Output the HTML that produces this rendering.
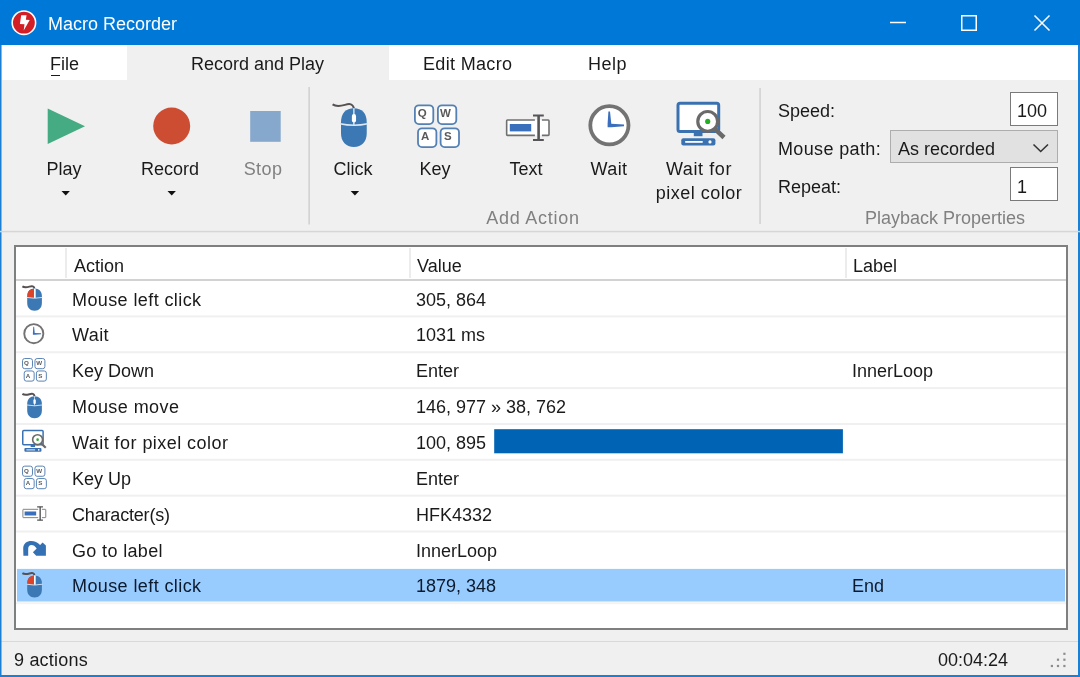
<!DOCTYPE html>
<html><head><meta charset="utf-8">
<style>
*{box-sizing:border-box;margin:0;padding:0}
html,body{width:1080px;height:677px;overflow:hidden;background:#f0f0f0;font-family:"Liberation Sans",sans-serif;color:#1a1a1a}
.a{position:absolute}
.t{position:absolute;font-size:18px;line-height:18px;white-space:nowrap;-webkit-font-smoothing:antialiased;will-change:transform}
.c{text-align:center;width:200px}
.g{color:#808080}
svg{position:absolute;left:0;top:0;overflow:visible}
</style></head><body>
<!-- title bar -->
<div class="a" style="left:0;top:0;width:1080px;height:45px;background:#0078d7"></div>
<div class="t" style="left:48px;top:15px;color:#fff">Macro Recorder</div>
<!-- menu row -->
<div class="a" style="left:2px;top:45px;width:1076px;height:35px;background:#fff"></div>
<div class="a" style="left:127px;top:45px;width:262px;height:35px;background:#f0f0f0"></div>
<div class="t" style="left:50px;top:55px">File</div>
<div class="a" style="left:51px;top:75px;width:9px;height:1px;background:#1a1a1a"></div>
<div class="t" style="left:191px;top:55px">Record and Play</div>
<div class="t" style="left:423px;top:55px;letter-spacing:0.33px">Edit Macro</div>
<div class="t" style="left:588px;top:55px;letter-spacing:0.5px">Help</div>

<!-- ribbon line -->




<!-- ribbon labels -->
<div class="t c" style="left:-36px;top:160px">Play</div>
<div class="t c" style="left:70px;top:160px">Record</div>
<div class="t c g" style="left:163px;top:160px;letter-spacing:0.4px">Stop</div>
<div class="t c" style="left:253px;top:160px">Click</div>
<div class="t c" style="left:335px;top:160px">Key</div>
<div class="t c" style="left:426px;top:160px">Text</div>
<div class="t c" style="left:509px;top:160px;letter-spacing:0.4px">Wait</div>
<div class="t c" style="left:599px;top:160px;letter-spacing:0.6px">Wait for</div>
<div class="t c" style="left:599px;top:184px;letter-spacing:0.5px">pixel color</div>
<div class="t c g" style="left:433px;top:209px;letter-spacing:0.75px">Add Action</div>
<div class="t c g" style="left:845px;top:209px">Playback Properties</div>

<div class="t" style="left:778px;top:102px">Speed:</div>
<div class="t" style="left:778px;top:140px;letter-spacing:0.36px">Mouse path:</div>
<div class="t" style="left:778px;top:178px">Repeat:</div>
<div class="a" style="left:1010px;top:92px;width:48px;height:34px;background:#fff;border:1.5px solid #7a7a7a"></div>
<div class="t" style="left:1017px;top:102px">100</div>
<div class="a" style="left:890px;top:130px;width:168px;height:33px;background:#e1e1e1;border:1.5px solid #adadad"></div>
<div class="t" style="left:898px;top:140px">As recorded</div>
<div class="a" style="left:1010px;top:167px;width:48px;height:34px;background:#fff;border:1.5px solid #7a7a7a"></div>
<div class="t" style="left:1017px;top:178px">1</div>

<!-- list box -->
<div class="a" style="left:14px;top:245px;width:1054px;height:385px;background:#fff;border:2px solid #7f7f7f"></div>
<div class="a" style="left:16px;top:279px;width:1050px;height:2px;background:#d2d2d2"></div>
<div class="a" style="left:65px;top:248px;width:2px;height:30px;background:#ececec"></div>
<div class="a" style="left:409px;top:248px;width:2px;height:30px;background:#ececec"></div>
<div class="a" style="left:845px;top:248px;width:2px;height:30px;background:#ececec"></div>
<div class="t" style="left:74px;top:257px">Action</div>
<div class="t" style="left:417px;top:257px">Value</div>
<div class="t" style="left:853px;top:257px">Label</div>

<svg width="1080" height="677" style="position:absolute;left:0;top:0">
<rect x="16" y="315.40" width="1050" height="2" fill="#f0f0f0"/>
<rect x="16" y="351.25" width="1050" height="2" fill="#f0f0f0"/>
<rect x="16" y="387.10" width="1050" height="2" fill="#f0f0f0"/>
<rect x="16" y="422.95" width="1050" height="2" fill="#f0f0f0"/>
<rect x="16" y="458.80" width="1050" height="2" fill="#f0f0f0"/>
<rect x="16" y="494.65" width="1050" height="2" fill="#f0f0f0"/>
<rect x="16" y="530.50" width="1050" height="2" fill="#f0f0f0"/>
<rect x="16" y="602.20" width="1050" height="2" fill="#f3f3f3"/>
<rect x="17" y="568.9" width="1048" height="32.6" fill="#98cbfe"/>
<rect x="494.2" y="429.2" width="348.7" height="24.1" fill="#0063b3"/>
</svg>
<div class="t" style="left:72px;top:291px;letter-spacing:0.4px">Mouse left click</div>
<div class="t" style="left:416px;top:291px">305, 864</div>
<div class="t" style="left:72px;top:326px;letter-spacing:0.4px">Wait</div>
<div class="t" style="left:416px;top:326px">1031 ms</div>
<div class="t" style="left:72px;top:362px">Key Down</div>
<div class="t" style="left:416px;top:362px">Enter</div>
<div class="t" style="left:852px;top:362px">InnerLoop</div>
<div class="t" style="left:72px;top:398px;letter-spacing:0.44px">Mouse move</div>
<div class="t" style="left:416px;top:398px">146, 977 » 38, 762</div>
<div class="t" style="left:72px;top:434px;letter-spacing:0.45px">Wait for pixel color</div>
<div class="t" style="left:416px;top:434px">100, 895</div>
<div class="t" style="left:72px;top:470px">Key Up</div>
<div class="t" style="left:416px;top:470px">Enter</div>
<div class="t" style="left:72px;top:506px;letter-spacing:-0.18px">Character(s)</div>
<div class="t" style="left:416px;top:506px">HFK4332</div>
<div class="t" style="left:72px;top:542px;letter-spacing:0.35px">Go to label</div>
<div class="t" style="left:416px;top:542px">InnerLoop</div>
<div class="t" style="left:72px;top:577px;color:#0c1a2e;letter-spacing:0.4px">Mouse left click</div>
<div class="t" style="left:416px;top:577px;color:#0c1a2e">1879, 348</div>
<div class="t" style="left:852px;top:577px;color:#0c1a2e">End</div>

<!-- status bar -->
<div class="a" style="left:0;top:641px;width:1080px;height:1px;background:#d9d9d9"></div>
<div class="t" style="left:14px;top:651px;letter-spacing:0.2px">9 actions</div>
<div class="t" style="left:938px;top:651px">00:04:24</div>

<!-- window borders -->


<svg width="1080" height="677" viewBox="0 0 1080 677">
<defs><clipPath id="mclip"><path d="M0,14 C0,5 5,0 13,0 C21,0 26,5 26,14 L26,25 C26,34 21,39 13,39 C5,39 0,34 0,25 Z"/></clipPath></defs>
<!-- title icon -->
<circle cx="23.9" cy="22.7" r="11.7" fill="#d21f26" stroke="#fff" stroke-width="1.6"/>
<path d="M21.2,15.2 L26.5,15.2 L25.9,19.8 L29.7,20 L23.7,30.5 L24.5,24.3 L19.9,24.1 Z" fill="#fff"/>
<!-- window buttons -->
<line x1="890" y1="22.5" x2="906" y2="22.5" stroke="#fff" stroke-width="1.5"/>
<rect x="961.75" y="15.75" width="14.5" height="14.5" fill="none" stroke="#fff" stroke-width="1.5"/>
<path d="M1034.5,15.5 L1049.5,30.5 M1049.5,15.5 L1034.5,30.5" stroke="#fff" stroke-width="1.5"/>
<!-- ribbon big icons -->
<polygon points="47.7,108.6 85,126.3 47.7,144" fill="#45ab82"/>
<circle cx="171.7" cy="126" r="18.5" fill="#cd4d33"/>
<rect x="250.2" y="111" width="30.5" height="30.8" fill="#85a8cc"/>
<polygon points="61.5,191 69.9,191 65.7,195.6" fill="#111"/>
<polygon points="167.5,191 175.9,191 171.7,195.6" fill="#111"/>
<polygon points="350.7,191 359.1,191 354.9,195.6" fill="#111"/>
<g transform="translate(341,108.3) scale(0.99)">
 <path d="M-8.5,-4 C-5,-1.5 -1,-2 4,-3.5 C9,-5 12,-4.5 13,0" fill="none" stroke="#575050" stroke-width="2" vector-effect="non-scaling-stroke"/>
 <path d="M0,14 C0,5 5,0 13,0 C21,0 26,5 26,14 L26,25 C26,34 21,39 13,39 C5,39 0,34 0,25 Z" fill="#3c78b4"/>
 <path d="M-1,15.6 Q13,18.6 27,15.6" fill="none" stroke="#dce9f7" stroke-width="1.6"/>
 <line x1="13" y1="0" x2="13" y2="17" stroke="#dce9f7" stroke-width="1.4"/>
 <rect x="11" y="5.7" width="4.2" height="8.6" rx="2" fill="#fff"/>
</g>
<g transform="translate(413.9,104.3)" font-family="Liberation Sans" font-weight="bold" font-size="11.5" fill="#5a5a5a" text-anchor="middle">
 <rect x="1" y="1" width="18.4" height="18.8" rx="4" fill="#fff" stroke="#5580b3" stroke-width="1.8"/>
 <rect x="24" y="1" width="18.4" height="18.8" rx="4" fill="#fff" stroke="#5580b3" stroke-width="1.8"/>
 <rect x="4.1" y="24" width="18.4" height="18.8" rx="4" fill="#fff" stroke="#5580b3" stroke-width="1.8"/>
 <rect x="26.7" y="24" width="18.4" height="18.8" rx="4" fill="#fff" stroke="#5580b3" stroke-width="1.8"/>
 <text x="8.4" y="13.2">Q</text><text x="31.6" y="13.2">W</text>
 <text x="11.3" y="36.2">A</text><text x="33.9" y="36.2">S</text>
</g>
<g transform="translate(505.9,114.4)">
 <rect x="0.75" y="5.6" width="42.35" height="15.4" fill="#fff"/>
 <path d="M29,5.6 L1.5,5.6 Q0.75,5.6 0.75,6.5 L0.75,20.2 Q0.75,21 1.5,21 L29,21 M36,5.6 L42.3,5.6 Q43.1,5.6 43.1,6.5 L43.1,20.2 Q43.1,21 42.3,21 L36,21" fill="none" stroke="#707070" stroke-width="1.6"/>
 <rect x="3.9" y="9.6" width="21.4" height="7.4" fill="#3a70bb"/>
 <path d="M32.7,0.8 L32.7,25.8" fill="none" stroke="#555" stroke-width="2.6"/><path d="M27.1,1 L37.9,1 M27.1,25.6 L37.9,25.6" fill="none" stroke="#555" stroke-width="2"/>
</g>
<g transform="translate(588.4,104.3)">
 <circle cx="21" cy="21" r="19.1" fill="#fff" stroke="#737373" stroke-width="3.8"/>
 <path d="M20,7.3 L21.6,7.3 L22.9,19.4 L35.6,20.3 L35.6,22 L22.9,23 L19.2,23 L19.2,19.4 Z" fill="#3b6fbd"/>
</g>
<g transform="translate(676.5,101.7)">
 <rect x="1.5" y="1.5" width="40.7" height="28.3" rx="2" fill="#fff" stroke="#3a71b0" stroke-width="3"/>
 <rect x="17.3" y="30" width="8.7" height="4.5" fill="#3a71b0"/>
 <rect x="4.8" y="36.5" width="34.1" height="7.2" rx="2" fill="#3a71b0"/>
 <rect x="8.7" y="39.3" width="17.5" height="1.8" fill="#fff"/>
 <circle cx="33.5" cy="40.2" r="1.6" fill="#fff"/>
 <line x1="37" y1="26" x2="47.5" y2="35.8" stroke="#6a6a6a" stroke-width="4.5"/>
 <circle cx="31.2" cy="19.7" r="9.9" fill="#fff" stroke="#6a6a6a" stroke-width="3.2"/>
 <circle cx="31.2" cy="19.7" r="2.6" fill="#22b022"/>
</g>
<path d="M1033.5,144.5 L1040.7,151.5 L1048,144.5" fill="none" stroke="#333" stroke-width="1.6"/>
<!-- list icons -->
<g transform="translate(27.2,288.6) scale(0.565)">
 <path d="M-8.5,-4 C-5,-1.5 -1,-2 4,-3.5 C9,-5 12,-4.5 13,0" fill="none" stroke="#575050" stroke-width="2" vector-effect="non-scaling-stroke"/>
 <path d="M0,14 C0,5 5,0 13,0 C21,0 26,5 26,14 L26,25 C26,34 21,39 13,39 C5,39 0,34 0,25 Z" fill="#3c78b4"/>
 <rect x="0" y="0" width="12" height="16.5" fill="#d9442b" clip-path="url(#mclip)"/>
 <path d="M-1,15.6 Q13,18.6 27,15.6" fill="none" stroke="#dce9f7" stroke-width="1.6"/>
 <rect x="12" y="0" width="3" height="16.5" fill="#fff"/>
</g>
<g transform="translate(23.3,323.2) scale(0.5)">
 <circle cx="21" cy="21" r="19.1" fill="#fff" stroke="#737373" stroke-width="3.8"/>
 <path d="M20,7.3 L21.6,7.3 L22.9,19.4 L35.6,20.3 L35.6,22 L22.9,23 L19.2,23 L19.2,19.4 Z" fill="#3b6fbd"/>
</g>
<g transform="translate(22,358) scale(0.54)" font-family="Liberation Sans" font-weight="bold" font-size="11.5" fill="#5a5a5a" text-anchor="middle">
 <rect x="1" y="1" width="18.4" height="18.8" rx="4" fill="#fff" stroke="#5580b3" stroke-width="1.8"/>
 <rect x="24" y="1" width="18.4" height="18.8" rx="4" fill="#fff" stroke="#5580b3" stroke-width="1.8"/>
 <rect x="4.1" y="24" width="18.4" height="18.8" rx="4" fill="#fff" stroke="#5580b3" stroke-width="1.8"/>
 <rect x="26.7" y="24" width="18.4" height="18.8" rx="4" fill="#fff" stroke="#5580b3" stroke-width="1.8"/>
 <text x="8.4" y="13.2">Q</text><text x="31.6" y="13.2">W</text>
 <text x="11.3" y="36.2">A</text><text x="33.9" y="36.2">S</text>
</g>
<g transform="translate(27.2,396.15) scale(0.565)">
 <path d="M-8.5,-4 C-5,-1.5 -1,-2 4,-3.5 C9,-5 12,-4.5 13,0" fill="none" stroke="#575050" stroke-width="2" vector-effect="non-scaling-stroke"/>
 <path d="M0,14 C0,5 5,0 13,0 C21,0 26,5 26,14 L26,25 C26,34 21,39 13,39 C5,39 0,34 0,25 Z" fill="#3c78b4"/>
 <path d="M-1,15.6 Q13,18.6 27,15.6" fill="none" stroke="#dce9f7" stroke-width="1.6"/>
 <line x1="13" y1="0" x2="13" y2="17" stroke="#dce9f7" stroke-width="1.4"/>
 <rect x="11" y="5.7" width="4.2" height="8.6" rx="2" fill="#fff"/>
</g>
<g transform="translate(22,429.8) scale(0.5)">
 <rect x="1.5" y="1.5" width="40.7" height="28.3" rx="2" fill="#fff" stroke="#3a71b0" stroke-width="3"/>
 <rect x="17.3" y="30" width="8.7" height="4.5" fill="#3a71b0"/>
 <rect x="4.8" y="36.5" width="34.1" height="7.2" rx="2" fill="#3a71b0"/>
 <rect x="8.7" y="39.3" width="17.5" height="1.8" fill="#fff"/>
 <circle cx="33.5" cy="40.2" r="1.6" fill="#fff"/>
 <line x1="37" y1="26" x2="47.5" y2="35.8" stroke="#6a6a6a" stroke-width="4.5"/>
 <circle cx="31.2" cy="19.7" r="9.9" fill="#fff" stroke="#6a6a6a" stroke-width="3.2"/>
 <circle cx="31.2" cy="19.7" r="2.6" fill="#22b022"/>
</g>
<g transform="translate(22,465.6) scale(0.54)" font-family="Liberation Sans" font-weight="bold" font-size="11.5" fill="#5a5a5a" text-anchor="middle">
 <rect x="1" y="1" width="18.4" height="18.8" rx="4" fill="#fff" stroke="#5580b3" stroke-width="1.8"/>
 <rect x="24" y="1" width="18.4" height="18.8" rx="4" fill="#fff" stroke="#5580b3" stroke-width="1.8"/>
 <rect x="4.1" y="24" width="18.4" height="18.8" rx="4" fill="#fff" stroke="#5580b3" stroke-width="1.8"/>
 <rect x="26.7" y="24" width="18.4" height="18.8" rx="4" fill="#fff" stroke="#5580b3" stroke-width="1.8"/>
 <text x="8.4" y="13.2">Q</text><text x="31.6" y="13.2">W</text>
 <text x="11.3" y="36.2">A</text><text x="33.9" y="36.2">S</text>
</g>
<g transform="translate(22.5,506.3) scale(0.54)">
 <rect x="0.75" y="5.6" width="42.35" height="15.4" fill="#fff"/>
 <path d="M29,5.6 L1.5,5.6 Q0.75,5.6 0.75,6.5 L0.75,20.2 Q0.75,21 1.5,21 L29,21 M36,5.6 L42.3,5.6 Q43.1,5.6 43.1,6.5 L43.1,20.2 Q43.1,21 42.3,21 L36,21" fill="none" stroke="#707070" stroke-width="1.6"/>
 <rect x="3.9" y="9.6" width="21.4" height="7.4" fill="#3a70bb"/>
 <path d="M32.7,0.8 L32.7,25.8" fill="none" stroke="#555" stroke-width="2.6"/><path d="M27.1,1 L37.9,1 M27.1,25.6 L37.9,25.6" fill="none" stroke="#555" stroke-width="2"/>
</g>
<path d="M23.4,555.7 L23.2,548.5 C23.2,543.6 27,541.1 31.2,541.1 C34.6,541.1 37.6,542.7 40.1,545 L42.6,542.5 L45.9,545.5 L45.9,555.7 L36.2,555.7 L32.9,552.2 L36.7,548.4 C35,546 33.5,544.9 31.5,544.9 C29.5,544.9 28.2,546.5 28.2,548.7 L28.2,555.7 Z" fill="#3471b4"/>
<g transform="translate(27.2,575.4) scale(0.565)">
 <path d="M-8.5,-4 C-5,-1.5 -1,-2 4,-3.5 C9,-5 12,-4.5 13,0" fill="none" stroke="#575050" stroke-width="2" vector-effect="non-scaling-stroke"/>
 <path d="M0,14 C0,5 5,0 13,0 C21,0 26,5 26,14 L26,25 C26,34 21,39 13,39 C5,39 0,34 0,25 Z" fill="#3c78b4"/>
 <rect x="0" y="0" width="12" height="16.5" fill="#d9442b" clip-path="url(#mclip)"/>
 <path d="M-1,15.6 Q13,18.6 27,15.6" fill="none" stroke="#dce9f7" stroke-width="1.6"/>
 <rect x="12" y="0" width="3" height="16.5" fill="#fff"/>
</g>
<rect x="1063.3" y="652.7" width="2.2" height="2.2" fill="#8c8c8c"/><rect x="1056.9" y="658.6" width="2.2" height="2.2" fill="#8c8c8c"/><rect x="1063.3" y="658.6" width="2.2" height="2.2" fill="#8c8c8c"/><rect x="1050.8" y="664.9" width="2.2" height="2.2" fill="#8c8c8c"/><rect x="1056.9" y="664.9" width="2.2" height="2.2" fill="#8c8c8c"/><rect x="1063.3" y="664.9" width="2.2" height="2.2" fill="#8c8c8c"/>
<rect x="0" y="45" width="1.5" height="632" fill="#1b7fd4"/><rect x="1078" y="45" width="2" height="632" fill="#1b7fd4"/><rect x="0" y="675" width="1080" height="2" fill="#1b7fd4"/>
<rect x="308.4" y="87" width="1.5" height="137.5" fill="#d0d0d0"/><rect x="759.3" y="88" width="1.5" height="136" fill="#d0d0d0"/><rect x="0" y="230.8" width="1080" height="1.5" fill="#d6d6d6"/>
</svg>
</body></html>
